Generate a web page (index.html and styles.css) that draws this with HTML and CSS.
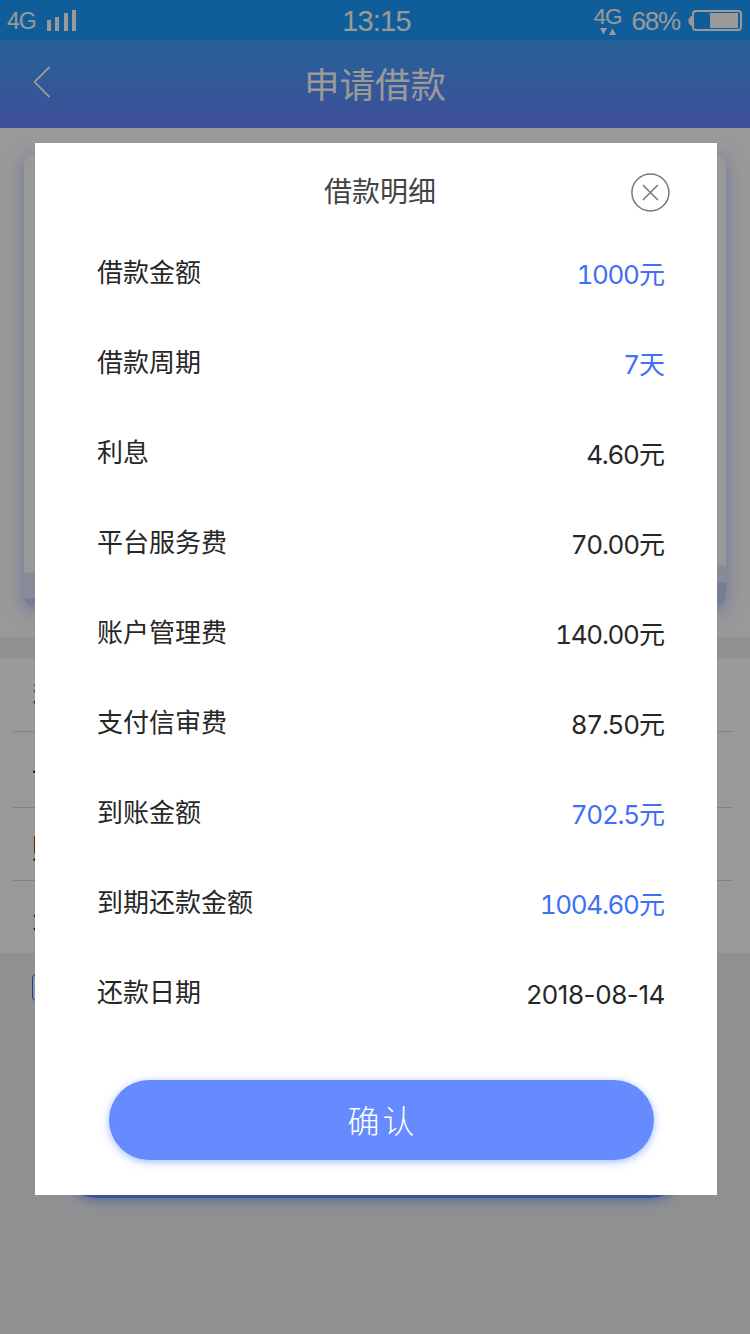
FILE: index.html
```html
<!DOCTYPE html>
<html lang="zh-CN">
<head>
<meta charset="utf-8">
<title>申请借款</title>
<link rel="stylesheet" href="styles.css">
</head>
<body>
<div class="screen">
  <div class="status">
    <div class="status-left">
      <span class="net">4G</span>
      <svg class="signal" width="30" height="22" viewBox="0 0 30 22"><path fill="#fff" d="M0 10h4v11H0zM8 7h4v14H8zM17 3h4v18h-4zM25 0h4v21h-4z"/></svg>
    </div>
    <span class="clock">13:15</span>
    <div class="status-right">
      <div class="data">
        <span class="data-net">4G</span>
        <svg width="18" height="7" viewBox="0 0 18 7"><path fill="#fff" d="M1 0h7L4.500 6.500zM10 7h7L13.500 .5z"/></svg>
      </div>
      <span class="percent">68%</span>
      <svg class="battery" width="55" height="22" viewBox="0 0 55 22"><rect x="5" y="1" width="48" height="19" rx="3" fill="none" stroke="#fff" stroke-width="2"/><path fill="#fff" d="M4 6v10H3L.5 13V9L3 6zM22 3h28v15H22z"/></svg>
    </div>
  </div>
  <header class="nav">
    <svg class="back" width="18" height="32" viewBox="0 0 18 32"><path d="M16.500 1L1.500 16l15 15" fill="none" stroke="#fff" stroke-width="1.800"/></svg>
    <h1 class="nav-title">申请借款</h1>
  </header>
  <section class="hero">
    <div class="card">
      <svg class="waves" width="702" height="46" viewBox="0 0 702 46"><path fill="#e2e8fb" d="M0 13Q180-6 351 8T640 4Q680 2 702 6V46H0z"/><path fill="#c5d2f8" d="M0 39Q180 20 351 30T640 24Q680 24 702 22V46H0z"/></svg>
    </div>
  </section>
  <ul class="list">
    <li class="item">利息</li>
    <li class="item">手续费</li>
    <li class="item">账户</li>
    <li class="item">还款</li>
  </ul>
  <div class="agree"><span class="check"></span></div>
  <div class="submit"></div>
  <div class="mask">
    <section class="dialog">
      <div class="dialog-head">
        <h2 class="dialog-title">借款明细</h2>
        <svg class="close" width="40" height="40" viewBox="0 0 40 40"><g fill="none" stroke="#777" stroke-width="1.500"><circle cx="20.400" cy="20.500" r="18.500"/><path d="M12.900 13l15 15M27.900 13l-15 15"/></g></svg>
      </div>
      <dl class="rows">
        <div class="row"><dt>借款金额</dt><dd class="blue"><span class="num">1000</span>元</dd></div>
        <div class="row"><dt>借款周期</dt><dd class="blue"><span class="num">7</span>天</dd></div>
        <div class="row"><dt>利息</dt><dd><span class="num">4.60</span>元</dd></div>
        <div class="row"><dt>平台服务费</dt><dd><span class="num">70.00</span>元</dd></div>
        <div class="row"><dt>账户管理费</dt><dd><span class="num">140.00</span>元</dd></div>
        <div class="row"><dt>支付信审费</dt><dd><span class="num">87.50</span>元</dd></div>
        <div class="row"><dt>到账金额</dt><dd class="blue"><span class="num">702.5</span>元</dd></div>
        <div class="row"><dt>到期还款金额</dt><dd class="blue"><span class="num">1004.60</span>元</dd></div>
        <div class="row"><dt>还款日期</dt><dd><span class="date">2018-08-14</span></dd></div>
      </dl>
      <button class="confirm">确认</button>
    </section>
  </div>
</div>
</body>
</html>
```
FILE: styles.css
```css
* { box-sizing: border-box; margin: 0; padding: 0; }
body { font-family: "Noto Sans CJK SC", sans-serif; }
.screen { position: relative; width: 750px; height: 1334px; overflow: hidden; background: #eff0f4; }
.status { display: grid; grid-template-columns: 1fr auto 1fr; align-items: center; height: 40px; padding: 0 8px 0 7px; background: #1c9dff; color: #fff; font-family: "Liberation Sans", Arial, sans-serif; }
.status-left { display: flex; align-items: center; gap: 11px; }
.net { font-size: 23px; letter-spacing: -1px; line-height: 40px; }
.signal { display: block; }
.clock { font-size: 29px; line-height: 42px; letter-spacing: -0.8px; padding-left: 4px; }
.status-right { display: flex; align-items: center; justify-content: flex-end; }
.data { display: flex; flex-direction: column; align-items: center; margin: -2px 10px 0 0; }
.data-net { font-size: 22.5px; line-height: 22px; letter-spacing: -1px; }
.percent { font-size: 26px; line-height: 42px; letter-spacing: -1.2px; margin-right: 8px; }
.battery { display: block; margin-right: -1px; }
.nav { display: grid; grid-template-columns: 100px 1fr 100px; align-items: center; height: 88px; background: linear-gradient(#3fa3fd, #6985ff); color: #fff; }
.back { margin: -4px 0 0 33px; }
.nav-title { margin-top: -2px; font-size: 35.5px; font-weight: 400; line-height: 88px; text-align: center; }
.hero { height: 509px; padding: 27px 24px 31px; background: #fff; }
.card { display: flex; align-items: flex-end; height: 451px; border-radius: 10px; background: #fff; box-shadow: 0 4px 18px rgba(105, 133, 255, .5); overflow: hidden; }
.waves { display: block; }
.list { margin-top: 21px; height: 295px; padding: 0 17px 0 13px; background: #fff; list-style: none; }
.item { height: 74px; padding-left: 20px; border-bottom: 1px solid #d8d8d8; font-size: 28px; font-weight: 500; line-height: 73px; color: #222; }
.item:nth-child(2) { height: 76px; padding-left: 19px; }
.item:nth-child(3) { height: 73px; padding-left: 19px; line-height: 79px; }
.item:last-child { height: 72px; border: 0; }
.agree { padding: 21px 0 0 32px; }
.check { display: block; width: 27px; height: 27px; border: 1px solid #2b6cf0; border-radius: 4px; }
.submit { width: 632px; height: 80px; margin: 117px auto 0 58px; border-radius: 40px; background: #6985ff; box-shadow: 0 3px 10px rgba(60, 130, 255, .5); }
.mask { position: absolute; inset: 0; padding: 143px 33px 0 35px; background: rgba(0, 0, 0, .4); }
.dialog { height: 1052px; background: #fff; }
.dialog-head { display: grid; grid-template-columns: 100px 1fr 100px; align-items: center; height: 84px; padding: 14px 0 0 8px; }
.dialog-title { grid-column: 2; font-size: 28px; font-weight: 400; line-height: 40px; text-align: center; color: #444; margin-top: -4px; }
.close { margin: 0 0 0 13px; }
.rows { padding: 0 52px 0 62px; }
.row { display: flex; justify-content: space-between; height: 90px; font-size: 26px; line-height: 88px; color: #272727; }
.row dd { padding-top: 2px; }
.row .blue { color: #3f70f5; }
.num { font-family: Inter, sans-serif; font-variant-numeric: tabular-nums; letter-spacing: -1.3px; padding-right: 0.3px; }
.date { font-family: Inter, sans-serif; letter-spacing: -0.4px; }
.confirm { display: block; width: 545px; height: 80px; margin: 43px 0 0 74px; padding: 0 0 2px 2px; border: 0; border-radius: 40px; background: #668bff; box-shadow: 0 2px 9px rgba(60, 130, 255, .5); color: #fff; font-family: inherit; font-size: 32px; font-weight: 300; line-height: 78px; letter-spacing: 3px; }
```
